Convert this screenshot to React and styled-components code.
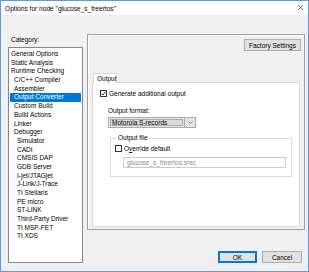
import styled, { createGlobalStyle } from 'styled-components';

const GlobalStyle = createGlobalStyle`
	html, body {
		margin: 0;
		padding: 0;
		background: #ffffff;
	}
	body {
		font-family: 'Liberation Sans', Arial, sans-serif;
		font-size: 6.5px;
		color: #000;
	}
`;

const Window = styled.div`
	width: 309px;
	height: 272px;
	box-sizing: border-box;
	border: 1px solid #5b9be0;
	display: flex;
	flex-direction: column;
	background: #f0f0f0;
`;

const TitleBar = styled.div`
	height: 16px;
	background: #ffffff;
	display: flex;
	align-items: center;
	justify-content: space-between;
	padding: 0 5px 0 4px;
`;

const Title = styled.span`
	font-size: 6.6px;
`;

const Close = styled.svg`
	width: 5px;
	height: 5px;
	margin-top: -1px;
`;

const Body = styled.div`
	flex: 1;
	display: flex;
	gap: 4px;
	padding: 19px 3px 8px 7px;
`;

const Sidebar = styled.div`
	width: 75px;
	display: flex;
	flex-direction: column;
`;

const Label = styled.div`
	height: 13px;
	line-height: 12px;
	padding-left: 3px;
`;

const List = styled.ul`
	flex: 1;
	margin: 0;
	padding: 2px 1px 1px;
	list-style: none;
	background: #ffffff;
	border: 1px solid #828790;
`;

const Item = styled.li`
	height: 8.7px;
	line-height: 8.7px;
	padding-left: ${({ level }) => 1 + level * 3}px;
	white-space: nowrap;
	background: ${({ selected }) => (selected ? '#0078d7' : 'transparent')};
	color: ${({ selected }) => (selected ? '#ffffff' : '#000000')};
`;

const RightColumn = styled.div`
	flex: 1;
	display: flex;
	flex-direction: column;
`;

const Panel = styled.div`
	height: 196px;
	box-sizing: border-box;
	border: 1px solid #a0a0a0;
	box-shadow: inset 1px 1px 0 #ffffff;
	display: flex;
	flex-direction: column;
	padding: 4px 3px 2px 4px;
`;

const TopRow = styled.div`
	display: flex;
	justify-content: flex-end;
	height: 12px;
`;

const Button = styled.button`
	font: inherit;
	height: 12px;
	width: ${({ w }) => w}px;
	padding: 0;
	margin: 0;
	box-sizing: border-box;
	background: #e1e1e1;
	border: 1px solid ${({ primary }) => (primary ? '#0078d7' : '#adadad')};
	box-shadow: ${({ primary }) => (primary ? 'inset 0 0 0 1px #0078d7' : 'none')};
	color: #000;
	text-align: center;
`;

const Tabs = styled.div`
	margin-top: 22px;
	flex: 1;
	display: flex;
	flex-direction: column;
	padding-right: 1px;
`;

const TabStrip = styled.div`
	display: flex;
	height: 9px;
	padding-left: 1px;
`;

const Tab = styled.div`
	width: 24px;
	box-sizing: border-box;
	background: #ffffff;
	border: 1px solid #d9d9d9;
	border-bottom: none;
	padding-left: 3px;
	line-height: 9px;
	position: relative;
	z-index: 1;
	margin-bottom: -1px;
`;

const TabPage = styled.div`
	flex: 1;
	background: #ffffff;
	border: 1px solid #d9d9d9;
	padding: 6px 0 0 7px;
`;

const CheckRow = styled.label`
	display: flex;
	align-items: center;
	gap: 2px;
	height: 8px;
`;

const Box = styled.span`
	width: 7px;
	height: 7px;
	box-sizing: border-box;
	border: 1px solid #333333;
	background: #ffffff;
	display: flex;
	align-items: center;
	justify-content: center;
`;

const Indented = styled.div`
	padding-left: 8px;
	display: flex;
	flex-direction: column;
`;

const FieldLabel = styled.div`
	margin-top: 10px;
	height: 8px;
	line-height: 8px;
`;

const Select = styled.div`
	margin-top: 2px;
	width: 88px;
	height: 11px;
	box-sizing: border-box;
	border: 1px solid #acacac;
	background: #e5e5e5;
	display: flex;
`;

const SelectValue = styled.div`
	flex: 1;
	border: 1px solid #acacac;
	margin: 1px;
	background: #dadada;
	line-height: 6px;
	padding-left: 1px;
	white-space: nowrap;
`;

const SelectArrow = styled.div`
	width: 10px;
	border-left: 1px solid #acacac;
	display: flex;
	align-items: center;
	justify-content: center;
`;

const Group = styled.fieldset`
	margin: 7px 0 0 2px;
	width: 182px;
	height: 42px;
	box-sizing: border-box;
	border: 1px solid #dcdcdc;
	padding: 3px 5px 0 4px;
	display: flex;
	flex-direction: column;
`;

const Legend = styled.legend`
	padding: 0 1px;
	margin-left: 2px;
	line-height: 6px;
`;

const Input = styled.div`
	margin: 5px 0 0 8px;
	height: 11px;
	box-sizing: border-box;
	border: 1px solid #cccccc;
	background: #ffffff;
	color: #8d8d8d;
	line-height: 9px;
	padding-left: 3px;
`;

const Footer = styled.div`
	margin-top: 21px;
	display: flex;
	justify-content: flex-end;
	gap: 5px;
	padding-right: 3px;
`;

const Underline = styled.span`
	text-decoration: underline;
`;

const items = [
	['General Options', 0],
	['Static Analysis', 0],
	['Runtime Checking', 0],
	['C/C++ Compiler', 1],
	['Assembler', 1],
	['Output Converter', 1],
	['Custom Build', 1],
	['Build Actions', 1],
	['Linker', 1],
	['Debugger', 1],
	['Simulator', 2],
	['CADI', 2],
	['CMSIS DAP', 2],
	['GDB Server', 2],
	['I-jet/JTAGjet', 2],
	['J-Link/J-Trace', 2],
	['TI Stellaris', 2],
	['PE micro', 2],
	['ST-LINK', 2],
	['Third-Party Driver', 2],
	['TI MSP-FET', 2],
	['TI XDS', 2],
];

const Check = () => (
	<svg width="5" height="5" viewBox="0 0 5 5">
		<path d="M0.5 2.5 L2 4 L4.6 0.6" stroke="#222" strokeWidth="0.9" fill="none" />
	</svg>
);

const App = () => (
	<>
		<GlobalStyle />
		<Window>
			<TitleBar>
				<Title>Options for node "glucose_s_freertos"</Title>
				<Close viewBox="0 0 5 5">
					<path d="M0 0 L5 5 M5 0 L0 5" stroke="#333" strokeWidth="0.7" />
				</Close>
			</TitleBar>
			<Body>
				<Sidebar>
					<Label>Category:</Label>
					<List>
						{items.map(([name, level]) => (
							<Item key={name} level={level} selected={name === 'Output Converter'}>
								{name}
							</Item>
						))}
					</List>
				</Sidebar>
				<RightColumn>
					<Panel>
						<TopRow>
							<Button w={57}>Factory Settings</Button>
						</TopRow>
						<Tabs>
							<TabStrip>
								<Tab>Output</Tab>
							</TabStrip>
							<TabPage>
								<CheckRow>
									<Box>
										<Check />
									</Box>
									Generate additional output
								</CheckRow>
								<Indented>
									<FieldLabel>Output format:</FieldLabel>
									<Select>
										<SelectValue>Motorola S-records</SelectValue>
										<SelectArrow>
											<svg width="5" height="3" viewBox="0 0 5 3">
												<path d="M0.3 0.3 L2.5 2.5 L4.7 0.3" stroke="#555" strokeWidth="0.7" fill="none" />
											</svg>
										</SelectArrow>
									</Select>
									<Group>
										<Legend>Output file</Legend>
										<CheckRow>
											<Box />
											<span>
												O<Underline>v</Underline>erride default
											</span>
										</CheckRow>
										<Input>glucose_s_freertos.srec</Input>
									</Group>
								</Indented>
							</TabPage>
						</Tabs>
					</Panel>
					<Footer>
						<Button w={39} primary>
							OK
						</Button>
						<Button w={40}>Cancel</Button>
					</Footer>
				</RightColumn>
			</Body>
		</Window>
	</>
);

export default App;
